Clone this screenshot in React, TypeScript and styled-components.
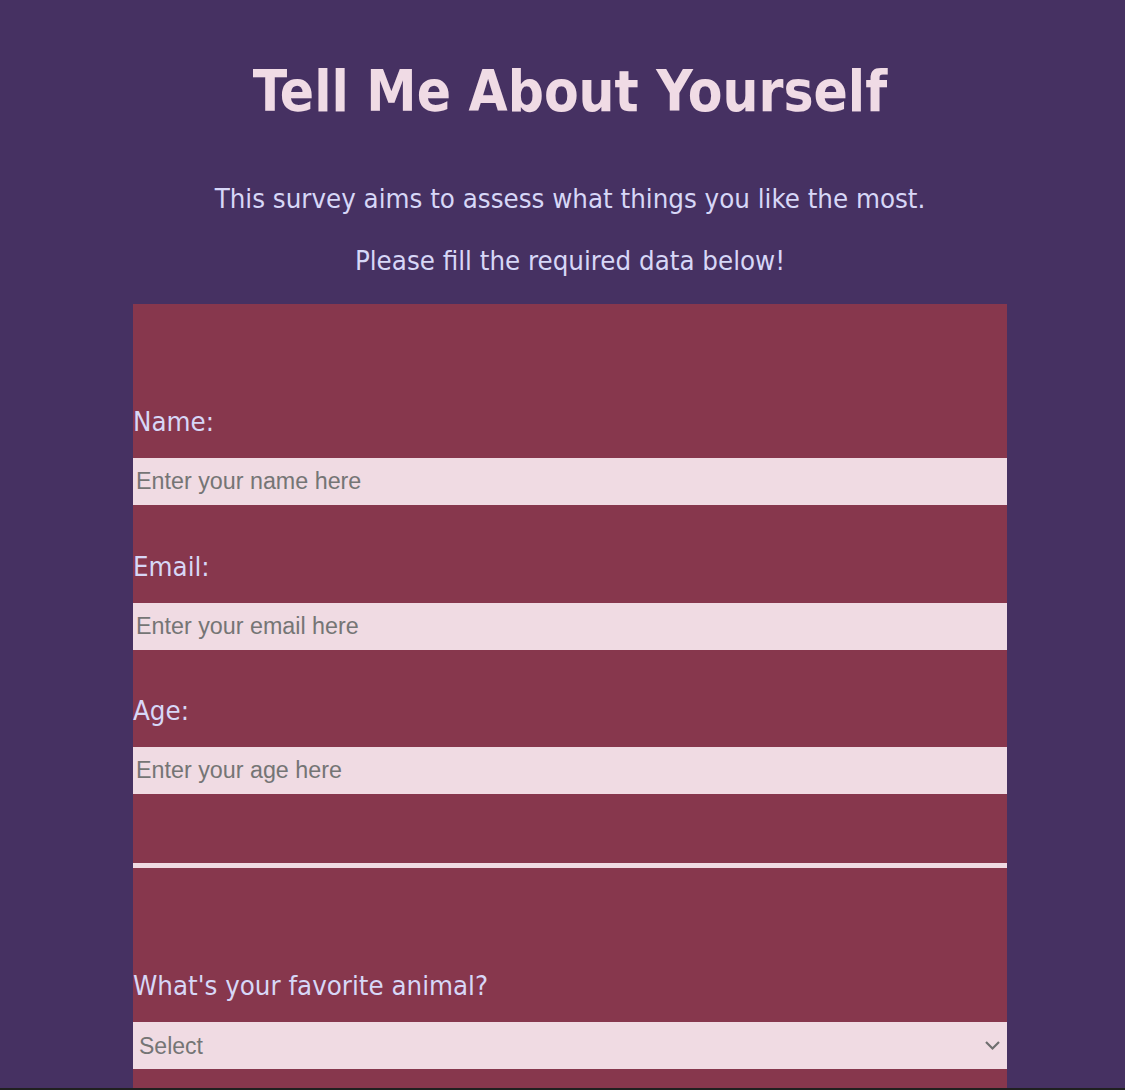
import React from "react";
import styled, { createGlobalStyle } from "styled-components";

const GlobalStyle = createGlobalStyle`
  html, body {
    margin: 0;
    padding: 0;
    background: #463162;
  }
  html { overflow: hidden; }
  body {
    font-family: "DejaVu Sans Condensed", "DejaVu Sans", sans-serif;
    font-stretch: condensed;
  }
`;

const Page = styled.main`
  display: flex;
  flex-direction: column;
  padding: 0 118px 0 133px;
`;

const Header = styled.header`
  display: flex;
  flex-direction: column;
  align-items: center;
`;

const Title = styled.h1`
  margin: 57px 0 0;
  font-size: 56.2px;
  font-weight: bold;
  line-height: 70px;
  color: #f0dbe5;
`;

const Lead = styled.p<{ $top: number }>`
  margin: ${(p) => p.$top}px 0 0;
  font-size: 27.4px;
  line-height: 32px;
  color: #d7d7f7;
`;

const Panel = styled.form`
  margin-top: 27px;
  background: #87374d;
  display: flex;
  flex-direction: column;
`;

const Section = styled.fieldset`
  margin: 0;
  border: none;
  padding: 102px 0 69px;
  display: flex;
  flex-direction: column;
  gap: 45.5px;
  & + & {
    border-top: 5px solid #f0dbe3;
  }
`;

const Field = styled.div`
  display: flex;
  flex-direction: column;
  gap: 21px;
`;

const Label = styled.label`
  font-size: 27.4px;
  line-height: 31px;
  color: #d7d7f7;
`;

const Input = styled.input`
  box-sizing: border-box;
  height: 47px;
  width: 100%;
  border: none;
  outline: none;
  margin: 0;
  padding: 0 3px;
  background: #f0dbe3;
  font-family: "Liberation Sans", Arial, sans-serif;
  font-size: 23.3px;
  color: #333;
  &::placeholder {
    color: #757575;
  }
`;

const SelectWrap = styled.div`
  position: relative;
  display: flex;
`;

const Select = styled.select`
  box-sizing: border-box;
  appearance: none;
  -webkit-appearance: none;
  height: 47px;
  width: 100%;
  border: none;
  outline: none;
  margin: 0;
  padding: 0 6px;
  background: #f0dbe3;
  font-family: "Liberation Sans", Arial, sans-serif;
  font-size: 23px;
  color: #757575;
  border-radius: 0;
`;

const Chevron = styled.svg`
  position: absolute;
  right: 6px;
  top: 17px;
  width: 17px;
  height: 12px;
  pointer-events: none;
`;

const BottomEdge = styled.div`
  position: fixed;
  left: 0;
  right: 0;
  bottom: 0;
  height: 2px;
  background: #202020;
`;

export default function App() {
  return (
    <>
      <GlobalStyle />
      <Page>
        <Header>
          <Title id="title">Tell Me About Yourself</Title>
          <Lead id="description" $top={56}>
            This survey aims to assess what things you like the most.
          </Lead>
          <Lead $top={30}>Please fill the required data below!</Lead>
        </Header>
        <Panel id="survey-form">
          <Section>
            <Field>
              <Label htmlFor="name">Name:</Label>
              <Input id="name" type="text" placeholder="Enter your name here" />
            </Field>
            <Field>
              <Label htmlFor="email">Email:</Label>
              <Input id="email" type="email" placeholder="Enter your email here" />
            </Field>
            <Field>
              <Label htmlFor="age">Age:</Label>
              <Input id="age" type="number" placeholder="Enter your age here" />
            </Field>
          </Section>
          <Section>
            <Field>
              <Label htmlFor="animal">What's your favorite animal?</Label>
              <SelectWrap>
                <Select id="animal" defaultValue="">
                  <option value="" disabled>
                    Select
                  </option>
                  <option value="dog">Dog</option>
                  <option value="cat">Cat</option>
                  <option value="bird">Bird</option>
                </Select>
                <Chevron viewBox="0 0 17 12" aria-hidden="true">
                  <path d="M2 3 L8.5 9.5 L15 3" fill="none" stroke="#6f6f6f" strokeWidth="2.2" />
                </Chevron>
              </SelectWrap>
            </Field>
          </Section>
        </Panel>
      </Page>
      <BottomEdge />
    </>
  );
}
